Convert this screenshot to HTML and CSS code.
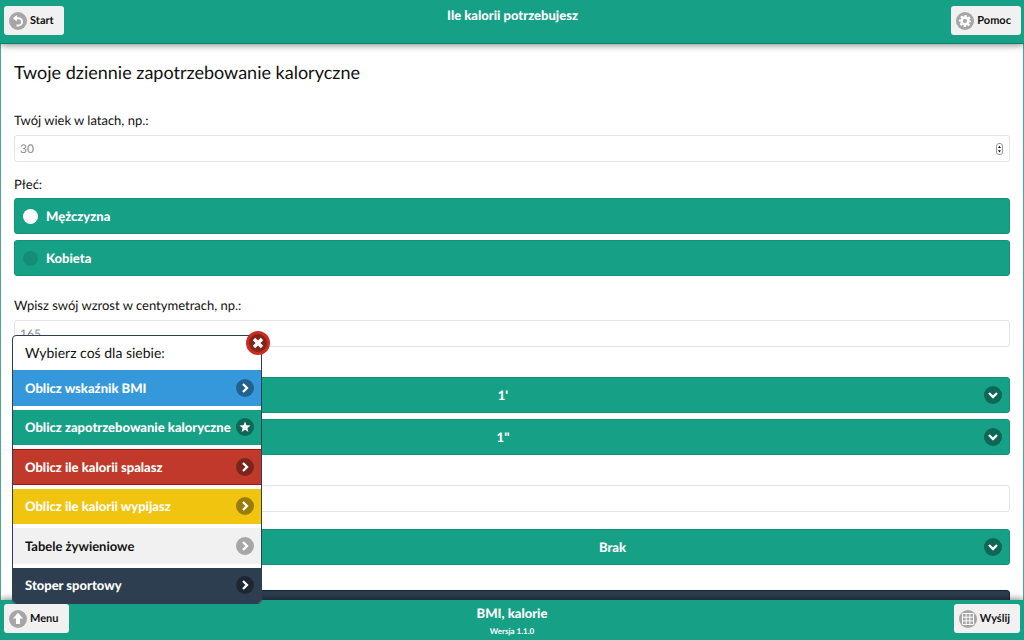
FILE: index.html
```html
<!DOCTYPE html>
<html lang="pl">
<head>
<meta charset="utf-8">
<meta name="viewport" content="width=device-width, initial-scale=1">
<title>Ile kalorii potrzebujesz</title>
<link rel="stylesheet" href="styles.css">
</head>
<body>
<svg class="sprite" aria-hidden="true">
  <symbol id="right" viewBox="0 0 18 18"><path d="M7 5l4 4-4 4" fill="none" stroke="#fff" stroke-width="2.3"/></symbol>
  <symbol id="star" viewBox="0 0 18 18"><path d="M9 3.4l1.45 3.8 4.1.2-3.2 2.55 1.1 3.95L9 11.65 5.55 13.9l1.1-3.95-3.2-2.55 4.1-.2z" fill="#fff"/></symbol>
  <symbol id="down" viewBox="0 0 18 18"><path d="M5 7l4 4 4-4" fill="none" stroke="#fff" stroke-width="2.3"/></symbol>
</svg>

<header class="bar bar-top">
  <button class="tool" type="button">
    <svg class="icon icon-gray" viewBox="0 0 18 18"><path d="M7.2 4v2.2h2.300a3.600 3.600 0 0 1 0 7.300H7.500" fill="none" stroke="#fff" stroke-width="1.900"/><path d="M7.800 3v6.400L3.800 6.200z" fill="#fff"/></svg>Start
  </button>
  <h1 class="bar-title">Ile kalorii potrzebujesz</h1>
  <button class="tool" type="button">
    <svg class="icon icon-gray" viewBox="0 0 18 18"><circle cx="9" cy="9" r="3.4" fill="none" stroke="#fff" stroke-width="2.6"/><circle cx="9" cy="9" r="5.1" fill="none" stroke="#fff" stroke-width="2" stroke-dasharray="2.3 1.705" stroke-dashoffset="1.15"/></svg>Pomoc
  </button>
</header>

<main class="page">
  <h2 class="heading">Twoje dziennie zapotrzebowanie kaloryczne</h2>
  <form class="form">
    <div class="field">
      <label class="label" for="age">Twój wiek w latach, np.:</label>
      <div class="number">
        <input class="input" id="age" type="number" placeholder="30">
        <svg class="spinner" viewBox="0 0 7 12" aria-hidden="true"><rect x=".5" y=".5" width="6" height="11" rx="2.5" fill="#fff" stroke="#999"/><path d="M2 5l1.5-2.2L5 5zM2 7.3h3L3.500 9.500z" fill="#111"/></svg>
      </div>
    </div>
    <fieldset class="field choices">
      <legend class="label">Płeć:</legend>
      <label class="choice"><input class="radio" type="radio" name="sex" checked>Mężczyzna</label>
      <label class="choice"><input class="radio" type="radio" name="sex">Kobieta</label>
    </fieldset>
    <div class="field">
      <label class="label" for="height">Wpisz swój wzrost w centymetrach, np.:</label>
      <input class="input" id="height" type="text" placeholder="165">
    </div>
    <div class="pair">
      <div class="select-box">
        <select class="select" aria-label="1'"><option>1'</option></select>
        <svg class="icon icon-dark select-icon" aria-hidden="true"><use href="#down"/></svg>
      </div>
      <div class="select-box">
        <select class="select" aria-label='1"'><option>1"</option></select>
        <svg class="icon icon-dark select-icon" aria-hidden="true"><use href="#down"/></svg>
      </div>
    </div>
    <input class="input weight" type="text" aria-labelledby="page-name">
    <div class="select-box activity">
      <select class="select" aria-label="Brak"><option>Brak</option></select>
      <svg class="icon icon-dark select-icon" aria-hidden="true"><use href="#down"/></svg>
    </div>
    <button class="submit" type="button" aria-labelledby="page-name"></button>
  </form>
</main>

<nav class="menu">
  <button class="close" type="button" aria-labelledby="menu-title"><svg class="icon icon-close" viewBox="0 0 18 18"><path d="M5 5l8 8M13 5l-8 8" stroke="#fff" stroke-width="3.400"/></svg></button>
  <h2 class="menu-title" id="menu-title">Wybierz coś dla siebie:</h2>
  <a class="item blue" href="#">Oblicz wskaźnik BMI<svg class="icon icon-dark"><use href="#right"/></svg></a>
  <a class="item green" href="#">Oblicz zapotrzebowanie kaloryczne<svg class="icon icon-dark"><use href="#star"/></svg></a>
  <a class="item red" href="#">Oblicz ile kalorii spalasz<svg class="icon icon-dark"><use href="#right"/></svg></a>
  <a class="item yellow" href="#">Oblicz ile kalorii wypijasz<svg class="icon icon-dark"><use href="#right"/></svg></a>
  <a class="item light" href="#">Tabele żywieniowe<svg class="icon icon-gray"><use href="#right"/></svg></a>
  <a class="item navy" href="#">Stoper sportowy<svg class="icon icon-dark"><use href="#right"/></svg></a>
</nav>

<footer class="bar bar-bottom">
  <button class="tool" type="button">
    <svg class="icon icon-gray" viewBox="0 0 18 18"><path d="M9 2.800L14 8.500h-3V14H7V8.500H4z" fill="#fff"/></svg>Menu
  </button>
  <div class="foot-text">
    <div class="bar-title" id="page-name">BMI, kalorie</div>
    <small class="version">Wersja 1.1.0</small>
  </div>
  <button class="tool" type="button">
    <svg class="icon icon-gray" viewBox="0 0 18 18"><path d="M3.500 3.500h11v11h-11zM7.200 3.500v11M10.900 3.500v11M3.500 7.200h11M3.500 10.900h11" fill="none" stroke="#fff"/></svg>Wyślij
  </button>
</footer>
</body>
</html>
```
FILE: styles.css
```css
* {
  box-sizing: border-box;
}

body {
  margin: 0;
  height: 100vh;
  display: flex;
  flex-direction: column;
  overflow: hidden;
  background: #fff;
  color: #111;
  font: 13px/18px Lato, sans-serif;
  text-rendering: geometricPrecision;
}

button, input, select {
  font: inherit;
  color: inherit;
  text-rendering: inherit;
}

.sprite {
  position: absolute;
  width: 0;
  height: 0;
}

.bar {
  z-index: 1;
  flex: none;
  display: grid;
  grid-template-columns: 1fr auto 1fr;
  align-items: start;
  padding: 6px 3px 8px 4px;
  background: #16a085;
  color: #fff;
  box-shadow: 0 0 8px rgba(0, 0, 0, 0.6);
}

.bar-top {
  border-bottom: 1px solid #0b806a;
}

.bar-bottom {
  padding: 4px 4px 0;
}

.bar-title {
  margin: 0;
  font-size: 13px;
  line-height: 18px;
  font-weight: 900;
  text-align: center;
}

.foot-text {
  text-align: center;
}

.version {
  display: block;
  font-size: 8px;
  line-height: 17px;
  font-weight: 700;
  padding-top: 1px;
}

.tool {
  display: flex;
  align-items: center;
  gap: 3px;
  height: 29px;
  padding: 0 10px 0 5px;
  border: 0;
  border-radius: 3px;
  background: #f1f1f1;
  color: #111;
  font-size: 11px;
  font-weight: 700;
  justify-self: start;
}

.tool:last-child {
  justify-self: end;
}

.icon {
  flex: none;
  display: block;
  width: 18px;
  height: 18px;
  border-radius: 50%;
}

.icon-gray {
  background: #a6a6a6;
}

.icon-dark {
  background: rgba(0, 0, 0, 0.36);
}

.icon-close {
  background: #82251c;
}

.page {
  flex: 1;
  min-height: 0;
  overflow: hidden;
  padding: 16px 13px 0;
  border: solid #4aa893;
  border-width: 0 1px;
}

.heading {
  margin: 0 0 27px;
  font-size: 18px;
  line-height: 24px;
  font-weight: 400;
}

.label {
  display: block;
  padding: 0 0 6px;
  line-height: 18px;
}

.input {
  display: block;
  width: 100%;
  height: 27px;
  padding: 0 5px;
  border: 1px solid #e3e3e3;
  border-radius: 3px;
  background: #fff;
  font-size: 12px;
  appearance: textfield;
}

.input::placeholder {
  color: #8c8c8c;
}

.input::-webkit-inner-spin-button {
  appearance: none;
}

.number {
  position: relative;
}

.spinner {
  position: absolute;
  right: 7px;
  top: 8px;
  width: 7px;
  height: 12px;
}

.choices {
  margin: 13px 0 20px;
  padding: 0;
  border: 0;
}

.choices .label {
  padding-bottom: 5px;
}

.choice {
  display: flex;
  align-items: center;
  gap: 8px;
  height: 36px;
  padding: 0 8px;
  border: 1px solid #0f9479;
  border-radius: 3px;
  background: #16a085;
  color: #fff;
  font-weight: 900;
}

.choice + .choice {
  margin-top: 6px;
}

.radio {
  appearance: none;
  width: 15px;
  height: 15px;
  margin: 0;
  border-radius: 50%;
  background: #158c75;
}

.radio:checked {
  background: #fff;
}

.pair {
  display: grid;
  gap: 6px;
  margin: 30px 0;
}

.select-box {
  position: relative;
}

.select {
  display: block;
  width: 100%;
  height: 36px;
  padding: 0 30px 0 12px;
  appearance: none;
  border: 1px solid #0f9479;
  border-radius: 3px;
  background: #16a085;
  color: #fff;
  font-weight: 900;
  text-align-last: center;
}

.select-icon {
  position: absolute;
  right: 8px;
  top: 9px;
}

.activity {
  margin: 17px 0 25px 22%;
}

.submit {
  display: block;
  width: 100%;
  height: 36px;
  border: 1px solid #12263a;
  border-radius: 3px;
  background: #2c3e50;
}

.menu {
  position: fixed;
  z-index: 2;
  left: 12px;
  bottom: 36px;
  width: 250px;
  min-height: 269px;
  display: flex;
  flex-direction: column;
  gap: 4px;
  border: 1px solid #2c3e50;
  border-radius: 4px;
  background: #fff;
}

.menu-title {
  margin: 0 0 -4px;
  padding: 0 12px;
  font-size: 14px;
  line-height: 34px;
  font-weight: 400;
}

.item {
  flex: 1;
  display: flex;
  align-items: center;
  justify-content: space-between;
  padding: 0 7px 0 12px;
  color: #fff;
  font-weight: 900;
  text-decoration: none;
}

.blue {
  background: #3498db;
}

.green {
  background: #16a085;
}

.red {
  background: #c0392b;
  box-shadow: inset 0 1px #b00d0d, inset 0 -1px #b00d0d;
}

.yellow {
  background: #f1c40f;
}

.light {
  background: #f1f1f1;
  color: #111;
  font-weight: 700;
}

.navy {
  background: #2c3e50;
  border-radius: 0 0 3px 3px;
}

.close {
  position: absolute;
  right: -9px;
  top: -5px;
  padding: 3px;
  border: 0;
  border-radius: 50%;
  background: #c82e20;
}
```
